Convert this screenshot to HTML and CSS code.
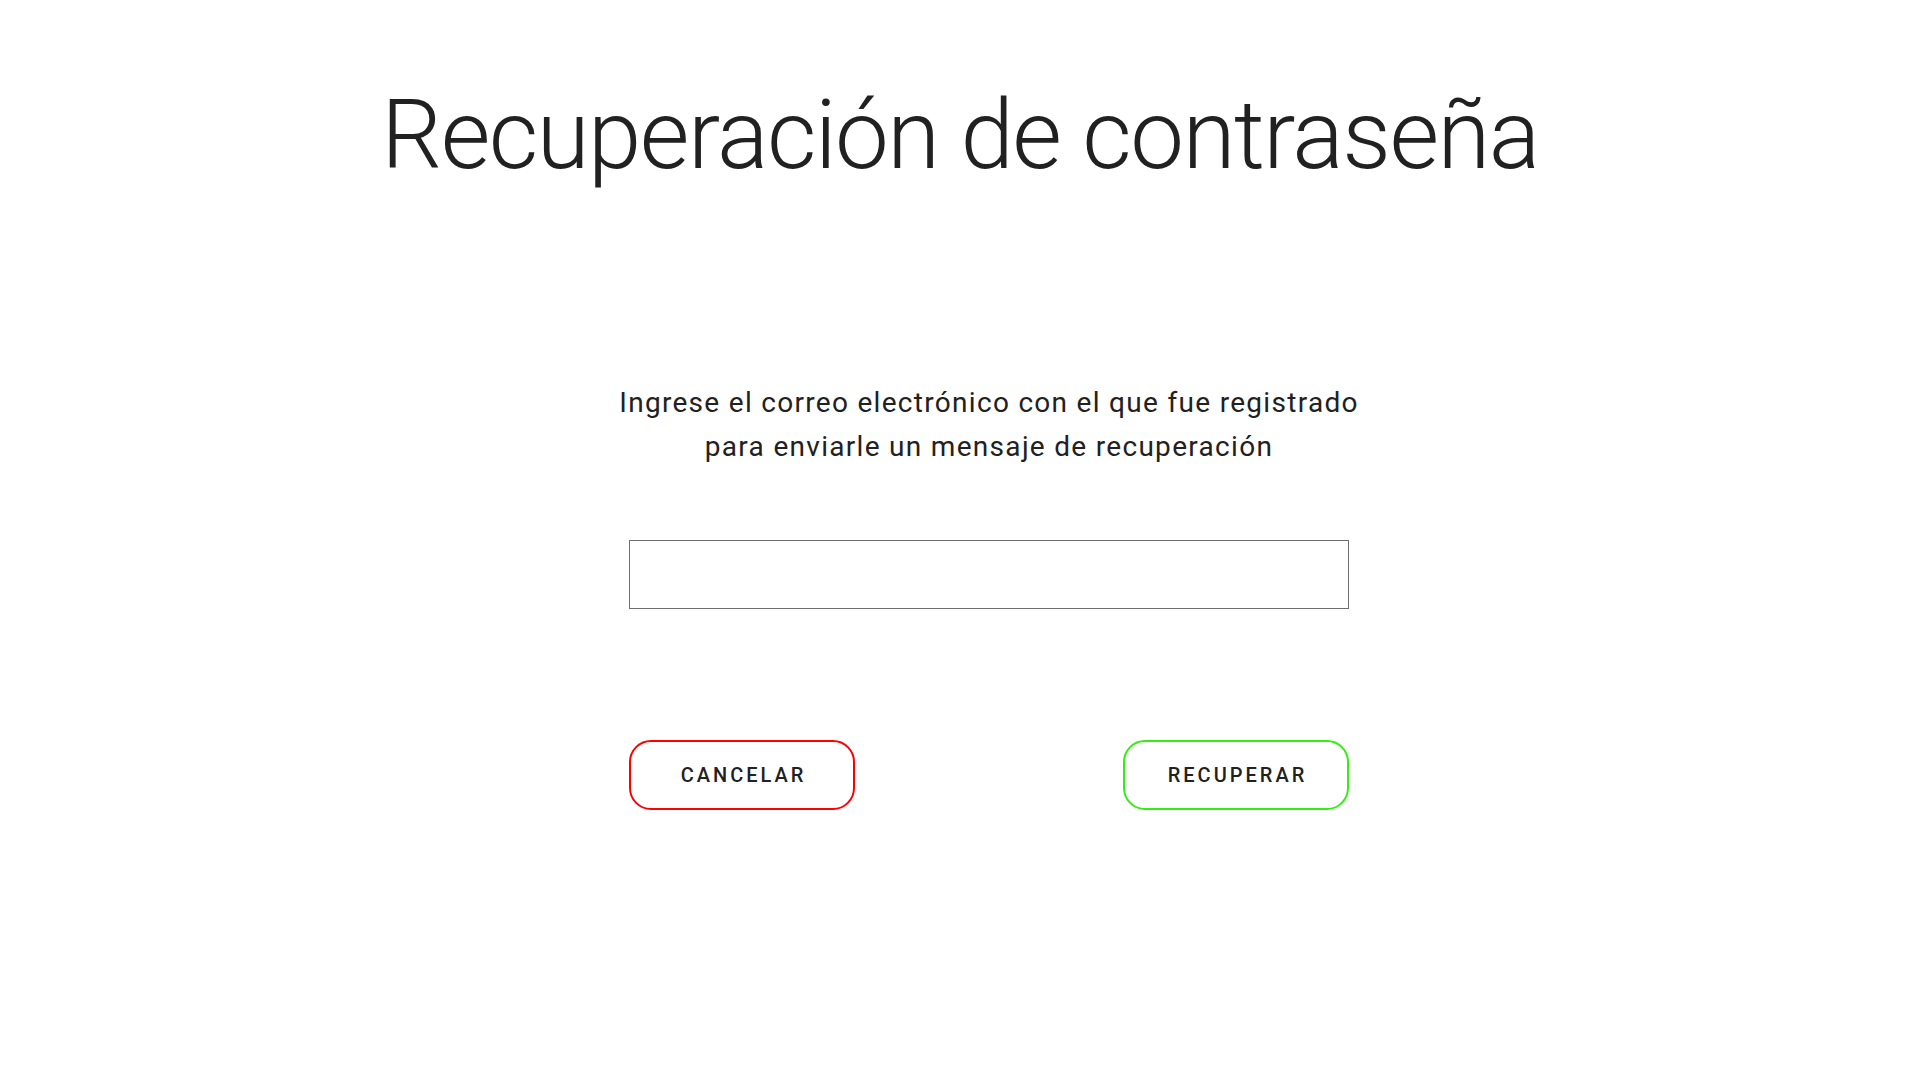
FILE: index.html
```html
<!DOCTYPE html>
<html lang="es">
<head>
<meta charset="utf-8">
<title>Recuperación de contraseña</title>
<link rel="stylesheet" href="styles.css">
</head>
<body>
<main class="page">
  <h1 class="title">Recuperación de contraseña</h1>
  <section class="form-wrap">
    <form class="form">
      <p class="intro">Ingrese el correo electrónico con el que fue registrado<br>para enviarle un mensaje de recuperación</p>
      <input class="email" type="email" aria-label="Correo electrónico">
      <div class="actions">
        <button type="button" class="btn btn-cancel">CANCELAR</button>
        <button type="button" class="btn btn-ok">RECUPERAR</button>
      </div>
    </form>
  </section>
</main>
</body>
</html>
```
FILE: styles.css
```css
html, body {
  margin: 0;
  padding: 0;
  background: #ffffff;
}
body {
  font-family: Roboto, "Liberation Sans", Arial, sans-serif;
  color: #212121;
}
.page {
  display: flex;
  flex-direction: column;
  align-items: center;
}
.title {
  margin: 0;
  padding-top: 79px;
  font-size: 96px;
  font-weight: 300;
  line-height: 112px;
  letter-spacing: -1.5px;
  text-align: center;
  color: #212121;
}
.form-wrap {
  width: 720px;
  padding-left: 58px;
  display: flex;
  justify-content: center;
}
.form {
  width: 720px;
  display: flex;
  flex-direction: column;
  align-items: stretch;
}
.intro {
  margin: 190px -40px 0 -40px;
  font-size: 28px;
  line-height: 44px;
  letter-spacing: 1.3px;
  text-align: center;
  white-space: nowrap;
  color: #212121;
}
.email {
  margin-top: 71px;
  height: 69px;
  box-sizing: border-box;
  border: 1px solid #6e6e6e;
  border-radius: 0;
  padding: 0 16px;
  font-family: inherit;
  font-size: 20px;
  outline: none;
  background: #fff;
}
.actions {
  margin-top: 131px;
  display: flex;
  justify-content: space-between;
}
.btn {
  width: 226px;
  height: 70px;
  box-sizing: border-box;
  background: #fff;
  border-radius: 22px;
  font-family: inherit;
  font-size: 20px;
  font-weight: 500;
  letter-spacing: 3px;
  color: #212121;
  cursor: pointer;
  padding: 0 0 0 3px;
}
.btn-cancel {
  border: 2px solid #ff0000;
}
.btn-ok {
  border: 2px solid #33ee11;
}
```
